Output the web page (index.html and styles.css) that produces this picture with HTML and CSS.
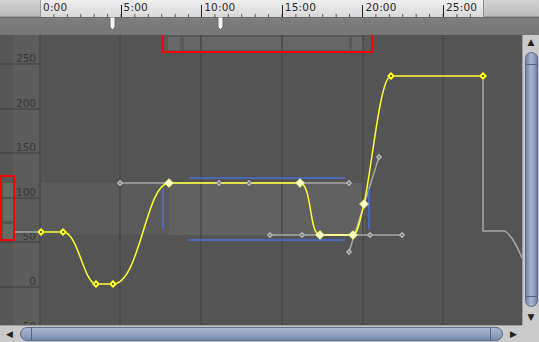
FILE: index.html
```html
<!DOCTYPE html>
<html lang="en">
<head>
  <meta charset="UTF-8">
  <title>curve editor</title>
  <link rel="stylesheet" href="styles.css">
</head>
<body>
  <div class="editor">
    <div class="ruler">
      <div class="ruler-corner"></div>
      <div class="ruler-track">
        <div class="ruler-seg first"><span>0:00</span></div>
        <div class="ruler-seg"><span>5:00</span></div>
        <div class="ruler-seg"><span>10:00</span></div>
        <div class="ruler-seg"><span>15:00</span></div>
        <div class="ruler-seg"><span>20:00</span></div>
        <div class="ruler-seg last"><span>25:00</span></div>
      </div>
      <div class="ruler-end"></div>
    </div>

    <div class="keybar">
      <svg width="539" height="18" viewBox="0 17 539 18">
        <path d="M110,17 h5 v10 l-2.5,3 l-2.5,-3 z" fill="#f4f4f4" stroke="#5a5a5a" stroke-width="0.8"/>
        <path d="M218,17 h5 v10 l-2.5,3 l-2.5,-3 z" fill="#f4f4f4" stroke="#5a5a5a" stroke-width="0.8"/>
      </svg>
    </div>

    <div class="body">
      <svg class="plot" width="522" height="290" viewBox="0 35 522 290">
        <defs>
          <g id="key">
            <path d="M0,-4 L4,0 L0,4 L-4,0 Z" fill="#ffff3a" stroke="#b8b800" stroke-width="0.6"/>
            <rect x="-1" y="-1" width="2" height="2" fill="#6b6b20"/>
          </g>
          <g id="sel">
            <path d="M0,-4.5 L4.5,0 L0,4.5 L-4.5,0 Z" fill="#ffffc8" stroke="#e8e860" stroke-width="0.6"/>
          </g>
          <g id="handle">
            <path d="M0,-3.2 L3.2,0 L0,3.2 L-3.2,0 Z" fill="#b4b4b4"/>
            <rect x="-0.8" y="-0.8" width="1.6" height="1.6" fill="#6a6a6a"/>
          </g>
        </defs>

        <rect x="0" y="35" width="522" height="290" fill="#545454"/>
        <rect x="0" y="35" width="13" height="290" fill="#565656"/>
        <rect x="13" y="35" width="27" height="290" fill="#5c5c5c"/>

        <!-- range on time axis -->
        <rect x="162" y="35" width="211" height="17" fill="#595959"/>
        <rect x="168" y="37" width="12" height="13" fill="#686868"/>
        <rect x="184" y="37" width="165" height="13" fill="#666666"/>
        <rect x="352" y="37" width="12" height="13" fill="#686868"/>

        <!-- range on value axis -->
        <rect x="3" y="183" width="10" height="38" fill="#686868"/>
        <rect x="3" y="224" width="10" height="15" fill="#686868"/>

        <!-- selection -->
        <rect x="13" y="183" width="156" height="52" fill="#5a5a5a"/>
        <rect x="169" y="183" width="196" height="52" fill="#616161"/>

        <g stroke="#484848" stroke-width="1.5">
          <path d="M40,35 V325 M120,35 V325 M201,35 V325 M282,35 V325 M363,35 V325 M443,35 V325"/>
          <path d="M0,64 H40 M0,109 H40 M0,153 H40 M0,198 H40 M0,242 H40 M0,287 H40"/>
        </g>

        <g class="axis" text-anchor="end">
          <text x="36" y="62">250</text>
          <text x="36" y="107">200</text>
          <text x="36" y="151">150</text>
          <text x="36" y="196">100</text>
          <text x="36" y="240">50</text>
          <text x="36" y="285">0</text>
          <text x="36" y="330">-50</text>
        </g>

        <!-- tangent handles -->
        <g stroke="#a8a8a8" stroke-width="1.5" fill="none">
          <path d="M13,232 H41"/>
          <path d="M120,183 H349"/>
          <path d="M270,235 H402"/>
          <path d="M349,252 L379,157"/>
          <path d="M483,76 V231 H505 C512,236 518,248 522,258"/>
        </g>

        <g stroke="#4a70d8" stroke-width="1.5">
          <path d="M189,178 H345 M189,240 H345 M163,189 V229 M369,189 V229"/>
        </g>

        <path d="M41,232 L63,232 C78,232 84,284 96,284 L113,284 C140,284 146,183 169,183 L300,183 C312,183 309,235 320,235 L353,235 C358,235 361,215 364,204 C372,168 380,76 391,76 L483,76"
              fill="none" stroke="#ffff30" stroke-width="1.5"/>
        <path d="M320,235 L353,235" stroke="#ffffb0" stroke-width="1.5"/>

        <use href="#handle" x="120" y="183"/>
        <use href="#handle" x="219" y="183"/>
        <use href="#handle" x="249" y="183"/>
        <use href="#handle" x="349" y="183"/>
        <use href="#handle" x="270" y="235"/>
        <use href="#handle" x="302" y="235"/>
        <use href="#handle" x="370" y="235"/>
        <use href="#handle" x="402" y="235"/>
        <use href="#handle" x="349" y="252"/>
        <use href="#handle" x="379" y="157"/>

        <use href="#key" x="41" y="232"/>
        <use href="#key" x="63" y="232"/>
        <use href="#key" x="96" y="284"/>
        <use href="#key" x="113" y="284"/>
        <use href="#key" x="391" y="76"/>
        <use href="#key" x="483" y="76"/>

        <use href="#sel" x="169" y="183"/>
        <use href="#sel" x="300" y="183"/>
        <use href="#sel" x="320" y="235"/>
        <use href="#sel" x="353" y="235"/>
        <use href="#sel" x="364" y="204"/>

        <!-- annotations -->
        <g fill="none" stroke="#ff0000" stroke-width="2">
          <rect x="163" y="32" width="209" height="20"/>
          <rect x="1" y="176" width="13" height="64"/>
        </g>
      </svg>

      <div class="vscroll">
        <span class="arrow">&#9650;</span>
        <div class="vthumb"><i></i><i></i></div>
        <span class="arrow">&#9660;</span>
      </div>

      <div class="hscroll">
        <span class="arrow">&#9664;</span>
        <div class="hthumb"><i></i><i></i></div>
        <span class="arrow">&#9654;</span>
      </div>

      <div class="corner"></div>
    </div>
  </div>
</body>
</html>
```

FILE: styles.css
```css
body {
  margin: 0;
  background: #545454;
  font-family: "DejaVu Sans", sans-serif;
}

.editor {
  width: 539px;
  height: 342px;
  overflow: hidden;
}

/* time ruler */
.ruler {
  display: flex;
  height: 17px;
}

.ruler-corner,
.ruler-end {
  background: linear-gradient(#d2d2d2, #bcbcbc);
  border-bottom: 1px solid #9a9a9a;
  box-sizing: border-box;
}

.ruler-corner {
  width: 40px;
}

.ruler-end {
  flex: 1;
  border-left: 1px solid #8c8c8c;
}

.ruler-track {
  width: 443px;
  display: flex;
  overflow: hidden;
  background: linear-gradient(#efefef, #d8d8d8);
}

.ruler-seg {
  flex: 0 0 80.6px;
  height: 17px;
  background:
    linear-gradient(#222, #222) 0 5px / 1px 12px no-repeat,
    linear-gradient(90deg, #555 1px, transparent 1px) 0 100% / 13.43px 3px repeat-x;
}

.ruler-seg.first {
  background:
    linear-gradient(#9a9a9a, #9a9a9a) 0 0 / 1px 17px no-repeat,
    linear-gradient(90deg, #555 1px, transparent 1px) 0 100% / 13.43px 3px repeat-x;
}

.ruler-seg.last {
  flex-basis: 40px;
}

.ruler-seg span {
  display: block;
  padding-left: 3px;
  font-size: 10.5px;
  line-height: 14px;
  color: #2a2a2a;
  letter-spacing: 0.2px;
}

/* key bar */
.keybar {
  height: 18px;
  background: linear-gradient(#7e7e7e, #777);
  border-top: 1px solid #6a6a6a;
  box-sizing: border-box;
}

.keybar svg {
  display: block;
  margin-top: -1px;
}

/* curve area */
.body {
  display: grid;
  grid-template-columns: 522px 17px;
  grid-template-rows: 290px 17px;
}

.plot {
  display: block;
}

.axis text {
  font-family: "DejaVu Sans", sans-serif;
  font-size: 10.5px;
  fill: #383838;
}

/* scrollbars */
.vscroll,
.hscroll,
.corner {
  background: #cacaca;
}

.vscroll {
  display: flex;
  flex-direction: column;
  align-items: center;
  border-left: 1px solid #9e9e9e;
  box-sizing: border-box;
  padding: 1px 0 1px;
}

.hscroll {
  display: flex;
  align-items: center;
  border-top: 1px solid #9e9e9e;
  box-sizing: border-box;
  padding: 0 2px 0 3px;
}

.arrow {
  font-size: 9px;
  color: #222;
  line-height: 12px;
  width: 13px;
  text-align: center;
}

.vscroll .arrow {
  height: 13px;
  line-height: 13px;
}

.vthumb {
  flex: 1;
  margin: 3px 0 4px;
  width: 13px;
  border: 1px solid #5a6a8a;
  border-radius: 7px;
  box-sizing: border-box;
  background: linear-gradient(90deg, #7486a8, #a5b5cf 45%, #93a4c2 70%, #6c7ea0);
  display: flex;
  flex-direction: column;
  justify-content: space-between;
  padding: 11px 0 9px;
}

.vthumb i {
  display: block;
  height: 1px;
  background: #55658a;
}

.hthumb {
  flex: 1;
  height: 14px;
  margin: 0 4px 0 4px;
  border: 1px solid #5a6a8a;
  border-radius: 7px;
  box-sizing: border-box;
  background: linear-gradient(#a8b7d0, #93a4c2 50%, #7a8cad);
  display: flex;
  justify-content: space-between;
  padding: 0 11px 0 10px;
}

.hthumb i {
  display: block;
  width: 1px;
  background: #55658a;
}
```
